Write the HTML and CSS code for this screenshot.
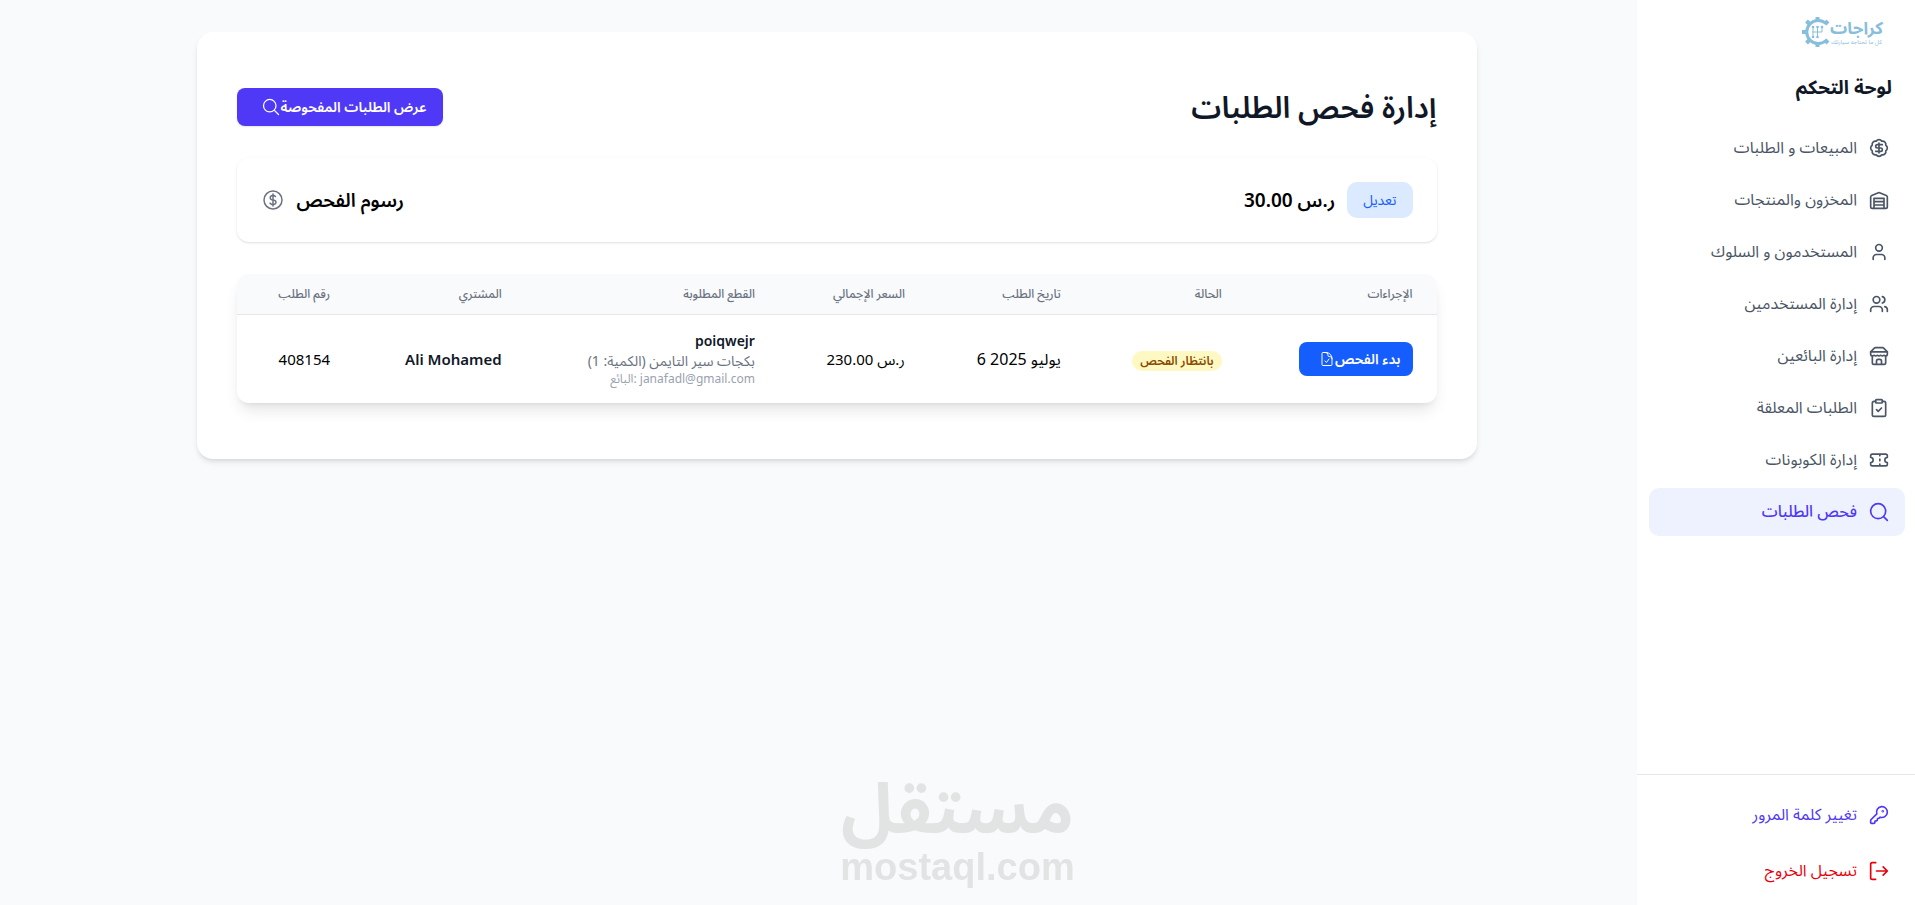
FILE: index.html
```html
<!DOCTYPE html>
<html lang="ar">
<head>
    <meta charset="UTF-8">
    <meta name="viewport" content="width=device-width, initial-scale=1.0">
    <title>إدارة فحص الطلبات</title>
    <link rel="stylesheet" href="styles.css">
</head>
<body>
    <div class="layout">
        <main class="main">
            <section class="panel">
                <header class="panel-header">
                    <button type="button" class="btn btn-primary">
                        <svg class="icon-sm" viewBox="0 0 24 24"><path d="m21 21-5.197-5.197m0 0A7.5 7.5 0 1 0 5.196 5.196a7.5 7.5 0 0 0 10.607 10.607Z"/></svg>
                        <span>عرض الطلبات المفحوصة</span>
                    </button>
                    <h1>إدارة فحص الطلبات</h1>
                </header>

                <div class="fee-card">
                    <div class="fee-label">
                        <svg class="icon-fee" viewBox="0 0 24 24"><path d="M12 6v12m-3-2.818.879.659c1.171.879 3.07.879 4.242 0 1.172-.879 1.172-2.303 0-3.182C13.536 12.219 12.768 12 12 12c-.725 0-1.45-.22-2.003-.659-1.106-.879-1.106-2.303 0-3.182s2.9-.879 4.006 0l.415.33M21 12a9 9 0 1 1-18 0 9 9 0 0 1 18 0Z"/></svg>
                        <h2>رسوم الفحص</h2>
                    </div>
                    <div class="fee-value">
                        <span class="fee-price">ر.س 30.00</span>
                        <button type="button" class="btn-edit">تعديل</button>
                    </div>
                </div>

                <div class="table-wrap">
                    <table>
                        <thead>
                            <tr>
                                <th class="col-id">رقم الطلب</th>
                                <th class="col-buyer">المشتري</th>
                                <th class="col-parts">القطع المطلوبة</th>
                                <th class="col-price">السعر الإجمالي</th>
                                <th class="col-date">تاريخ الطلب</th>
                                <th class="col-status">الحالة</th>
                                <th class="col-actions">الإجراءات</th>
                            </tr>
                        </thead>
                        <tbody>
                            <tr>
                                <td class="order-id">408154</td>
                                <td class="buyer">Ali Mohamed</td>
                                <td class="parts">
                                    <div class="part-name">poiqwejr</div>
                                    <div class="part-desc">بكجات سير التايمن (الكمية: 1)</div>
                                    <div class="part-seller">البائع: janafadl@gmail.com</div>
                                </td>
                                <td class="price">ر.س 230.00</td>
                                <td>6 يوليو 2025</td>
                                <td><span class="badge">بانتظار الفحص</span></td>
                                <td>
                                    <button type="button" class="btn btn-start">
                                        <svg class="icon-xs" viewBox="0 0 24 24"><path d="M10.125 2.25h-4.5c-.621 0-1.125.504-1.125 1.125v17.25c0 .621.504 1.125 1.125 1.125h12.75c.621 0 1.125-.504 1.125-1.125v-9M10.125 2.25h.375a9 9 0 0 1 9 9v.375M10.125 2.25A3.375 3.375 0 0 1 13.5 5.625v1.5c0 .621.504 1.125 1.125 1.125h1.5a3.375 3.375 0 0 1 3.375 3.375M9 15l2.25 2.25L15 12"/></svg>
                                        <span>بدء الفحص</span>
                                    </button>
                                </td>
                            </tr>
                        </tbody>
                    </table>
                </div>
            </section>
        </main>

        <aside class="sidebar" dir="rtl">
            <div class="logo">
                <div class="logo-text">
                    <span class="logo-name">كراجات</span>
                    <span class="logo-tag">كل ما تحتاجه سيارتك</span>
                </div>
                <svg class="logo-gear" viewBox="0 0 28 32">
                    <path class="gear-ring" d="M24 7.500A11.500 11.500 0 1 0 24 24.500"/>
                    <path class="gear-teeth" d="M15.500 5V1M7.500 8L4.500 5M4 16H0M7.500 24L4.500 27M15.500 27V31M23 8L26 5M23 24L26 27"/>
                    <path class="gear-shift" d="M11 11V21M15.500 11V21M20 11V16H11"/>
                    <g class="gear-dots"><circle cx="11" cy="11" r="1.300"/><circle cx="15.500" cy="11" r="1.300"/><circle cx="20" cy="11" r="1.300"/><circle cx="11" cy="21" r="1.300"/><circle cx="15.500" cy="21" r="1.300"/></g>
                </svg>
            </div>
            <h2 class="sidebar-title">لوحة التحكم</h2>
            <nav class="nav">
                <a href="#" class="nav-link">
                    <svg viewBox="0 0 24 24"><path d="M3.850 8.620a4 4 0 0 1 4.780-4.770 4 4 0 0 1 6.740 0 4 4 0 0 1 4.780 4.780 4 4 0 0 1 0 6.740 4 4 0 0 1-4.770 4.780 4 4 0 0 1-6.750 0 4 4 0 0 1-4.780-4.770 4 4 0 0 1 0-6.760Z"/><path d="M16 8h-6a2 2 0 1 0 0 4h4a2 2 0 1 1 0 4H8M12 18V6"/></svg>
                    <span>المبيعات و الطلبات</span>
                </a>
                <a href="#" class="nav-link">
                    <svg viewBox="0 0 24 24"><path d="M22 8.350V20a2 2 0 0 1-2 2H4a2 2 0 0 1-2-2V8.350A2 2 0 0 1 3.260 6.500l8-3.200a2 2 0 0 1 1.480 0l8 3.200A2 2 0 0 1 22 8.350Z"/><path d="M6 18h12M6 14h12M6 22V10h12v12"/></svg>
                    <span>المخزون والمنتجات</span>
                </a>
                <a href="#" class="nav-link">
                    <svg viewBox="0 0 24 24"><path d="M19 21v-2a4 4 0 0 0-4-4H9a4 4 0 0 0-4 4v2"/><circle cx="12" cy="7" r="4"/></svg>
                    <span>المستخدمون و السلوك</span>
                </a>
                <a href="#" class="nav-link">
                    <svg viewBox="0 0 24 24"><path d="M16 21v-2a4 4 0 0 0-4-4H6a4 4 0 0 0-4 4v2"/><circle cx="9" cy="7" r="4"/><path d="M22 21v-2a4 4 0 0 0-3-3.870M16 3.130a4 4 0 0 1 0 7.750"/></svg>
                    <span>إدارة المستخدمين</span>
                </a>
                <a href="#" class="nav-link">
                    <svg viewBox="0 0 24 24"><path d="m2 7 4.410-4.410A2 2 0 0 1 7.830 2h8.340a2 2 0 0 1 1.420.590L22 7M4 12v8a2 2 0 0 0 2 2h12a2 2 0 0 0 2-2v-8M15 22v-4a2 2 0 0 0-2-2h-2a2 2 0 0 0-2 2v4M2 7h20"/><path d="M22 7v3a2 2 0 0 1-2 2 2.700 2.700 0 0 1-1.590-.630.700.700 0 0 0-.820 0A2.700 2.700 0 0 1 16 12a2.700 2.700 0 0 1-1.590-.630.700.700 0 0 0-.820 0A2.700 2.700 0 0 1 12 12a2.700 2.700 0 0 1-1.590-.630.700.700 0 0 0-.820 0A2.700 2.700 0 0 1 8 12a2.700 2.700 0 0 1-1.590-.630.700.700 0 0 0-.820 0A2.700 2.700 0 0 1 4 12a2 2 0 0 1-2-2V7"/></svg>
                    <span>إدارة البائعين</span>
                </a>
                <a href="#" class="nav-link">
                    <svg viewBox="0 0 24 24"><rect x="8" y="2" width="8" height="4" rx="1"/><path d="M16 4h2a2 2 0 0 1 2 2v14a2 2 0 0 1-2 2H6a2 2 0 0 1-2-2V6a2 2 0 0 1 2-2h2M9 14l2 2 4-4"/></svg>
                    <span>الطلبات المعلقة</span>
                </a>
                <a href="#" class="nav-link">
                    <svg viewBox="0 0 24 24"><path d="M2 9a3 3 0 0 1 0 6v2a2 2 0 0 0 2 2h16a2 2 0 0 0 2-2v-2a3 3 0 0 1 0-6V7a2 2 0 0 0-2-2H4a2 2 0 0 0-2 2ZM13 5v2M13 17v2M13 11v2"/></svg>
                    <span>إدارة الكوبونات</span>
                </a>
                <a href="#" class="nav-link active">
                    <svg viewBox="0 0 24 24"><circle cx="11" cy="11" r="9"/><path d="m22 22-4.500-4.500"/></svg>
                    <span>فحص الطلبات</span>
                </a>
            </nav>
            <div class="sidebar-footer">
                <a href="#" class="nav-link link-password">
                    <svg viewBox="0 0 24 24"><path d="M2.590 17.410A2 2 0 0 0 2 18.830V21a1 1 0 0 0 1 1h3a1 1 0 0 0 1-1v-1a1 1 0 0 1 1-1h1a1 1 0 0 0 1-1v-1a1 1 0 0 1 1-1h.170a2 2 0 0 0 1.420-.590l.810-.810a6.500 6.500 0 1 0-4-4Z"/><circle cx="16.500" cy="7.500" r=".5"/></svg>
                    <span>تغيير كلمة المرور</span>
                </a>
                <button type="button" class="nav-link link-logout">
                    <svg viewBox="0 0 24 24"><path d="M8 22H4a2 2 0 0 1-2-2V4a2 2 0 0 1 2-2h4"/><path d="m17 17 5-5-5-5M21 12H9"/></svg>
                    <span>تسجيل الخروج</span>
                </button>
            </div>
        </aside>
    </div>

    <div class="watermark">
        <span class="watermark-ar">مستقل</span>
        <span class="watermark-en">mostaql.com</span>
    </div>
</body>
</html>
```
FILE: styles.css
```css
* {
    margin: 0;
    padding: 0;
    box-sizing: border-box;
}

body {
    font-family: "Noto Sans", "Noto Sans Arabic", "DejaVu Sans", sans-serif;
    background: #f9fafc;
    color: #000;
}

button {
    font-family: inherit;
    border: none;
    cursor: pointer;
}

svg {
    fill: none;
    stroke: currentColor;
    stroke-linecap: round;
    stroke-linejoin: round;
    flex-shrink: 0;
}

.layout {
    display: flex;
    min-height: 100vh;
}

.main {
    flex: 1;
    padding: 32px 0 32px 36px;
}

.panel {
    max-width: 1280px;
    margin: 0 auto;
    padding: 56px 40px;
    background: #fff;
    border-radius: 16px;
    box-shadow: 0 4px 6px -1px rgba(0, 0, 0, 0.1), 0 2px 4px -2px rgba(0, 0, 0, 0.1);
}

.panel-header {
    display: flex;
    align-items: center;
    justify-content: space-between;
    height: 38px;
    margin-bottom: 32px;
}

.panel-header h1 {
    font-size: 30px;
    line-height: 36px;
    font-weight: 600;
    color: #101828;
}

.btn {
    display: inline-flex;
    align-items: center;
    color: #fff;
    font-size: 14px;
    line-height: 20px;
    font-weight: 600;
}

.btn-primary {
    height: 38px;
    padding: 0 16px 0 24px;
    background: #4f39f6;
    border-radius: 8px;
    box-shadow: 0 1px 2px rgba(0, 0, 0, 0.1);
}

.icon-sm {
    width: 20px;
    height: 20px;
    stroke-width: 1.5;
}

.icon-xs {
    width: 16px;
    height: 16px;
    stroke-width: 1.5;
}

.fee-card {
    display: flex;
    align-items: center;
    justify-content: space-between;
    padding: 24px;
    margin-bottom: 32px;
    border-radius: 12px;
    box-shadow: 0 1px 3px rgba(0, 0, 0, 0.1), 0 1px 2px -1px rgba(0, 0, 0, 0.1);
}

.fee-label,
.fee-value {
    display: flex;
    align-items: center;
    gap: 12px;
}

.fee-label h2,
.fee-price {
    font-size: 19px;
    line-height: 28px;
    font-weight: 600;
}

.icon-fee {
    width: 24px;
    height: 24px;
    stroke-width: 1.5;
    color: #6a7282;
}

.btn-edit {
    height: 36px;
    padding: 0 16px;
    background: #dbeafe;
    color: #155dfc;
    border-radius: 10px;
    font-size: 14px;
}

.table-wrap {
    overflow: hidden;
    border-radius: 12px;
    box-shadow: 0 10px 15px -3px rgba(0, 0, 0, 0.1), 0 4px 6px -4px rgba(0, 0, 0, 0.1);
}

table {
    width: 100%;
    table-layout: fixed;
    border-collapse: collapse;
    text-align: right;
}

thead {
    background: #f9fafb;
    border-bottom: 1px solid #e5e7eb;
}

th {
    padding: 12px 24px;
    font-size: 12px;
    line-height: 16px;
    font-weight: 500;
    color: #6a7282;
    white-space: nowrap;
}

td {
    padding: 16px 24px;
    font-size: 16px;
    line-height: 24px;
    white-space: nowrap;
}

.col-id { width: 9.8%; }
.col-buyer { width: 14.3%; }
.col-parts { width: 21.1%; }
.col-price { width: 12.5%; }
.col-date { width: 13%; }
.col-status { width: 13.4%; }

.order-id,
.buyer,
.price {
    font-size: 15px;
}

.buyer {
    font-weight: 600;
    color: #101828;
}

.part-name,
.part-desc {
    font-size: 14px;
    line-height: 20px;
}

.part-name {
    font-weight: 600;
    color: #101828;
}

.part-desc {
    color: #6a7282;
}

.part-seller {
    font-size: 12px;
    line-height: 16px;
    color: #99a1af;
}

.badge {
    display: inline-block;
    padding: 0 8px;
    background: #fef9c2;
    color: #894b00;
    border-radius: 10px;
    font-size: 12px;
    line-height: 20px;
    font-weight: 600;
}

.btn-start {
    height: 34px;
    padding: 0 12px 0 20px;
    background: #155dfc;
    border-radius: 8px;
}

.sidebar {
    display: flex;
    flex-direction: column;
    width: 278px;
    background: #fff;
}

.logo {
    display: flex;
    align-items: center;
    height: 32px;
    margin: 16px 32px 0 0;
    color: #87bedb;
}

.logo-text {
    display: flex;
    flex-direction: column;
    align-items: center;
}

.logo-name {
    font-size: 17px;
    line-height: 20px;
    font-weight: 700;
}

.logo-tag {
    font-size: 6px;
    line-height: 8px;
    white-space: nowrap;
}

.logo-gear {
    width: 28px;
    height: 32px;
}

.gear-ring { stroke-width: 3; }
.gear-teeth { stroke-width: 4; stroke-linecap: butt; }
.gear-shift { stroke-width: 1; }
.gear-dots { fill: currentColor; stroke: none; }

.sidebar-title {
    margin: 24px 23px 22px 0;
    font-size: 19px;
    line-height: 30px;
    font-weight: 700;
    color: #101828;
}

.nav {
    display: flex;
    flex-direction: column;
    gap: 4px;
    flex: 1;
    padding: 0 10px 0 12px;
}

.nav-link {
    display: flex;
    align-items: center;
    gap: 12px;
    height: 48px;
    padding: 0 16px;
    border-radius: 10px;
    background: none;
    color: #4a5565;
    font-size: 16px;
    text-decoration: none;
}

.nav-link svg {
    width: 20px;
    height: 20px;
    stroke-width: 2;
}

.nav-link.active {
    background: #eef2ff;
    color: #4f39f6;
    font-weight: 500;
}

.sidebar-footer {
    display: flex;
    flex-direction: column;
    gap: 8px;
    padding: 16px 10px 10px 12px;
    border-top: 1px solid #e5e7eb;
}

.nav-link.link-password { color: #4f39f6; }
.nav-link.link-logout { color: #e7000b; }

.watermark {
    position: fixed;
    left: 50%;
    bottom: 20px;
    transform: translateX(-50%);
    display: flex;
    flex-direction: column;
    align-items: center;
    gap: 8px;
    color: #e2e4e4;
    font-weight: 700;
    pointer-events: none;
}

.watermark-ar {
    font-size: 70px;
    line-height: 70px;
}

.watermark-en {
    font-family: "Liberation Sans", sans-serif;
    font-size: 38px;
    line-height: 36px;
}
```
